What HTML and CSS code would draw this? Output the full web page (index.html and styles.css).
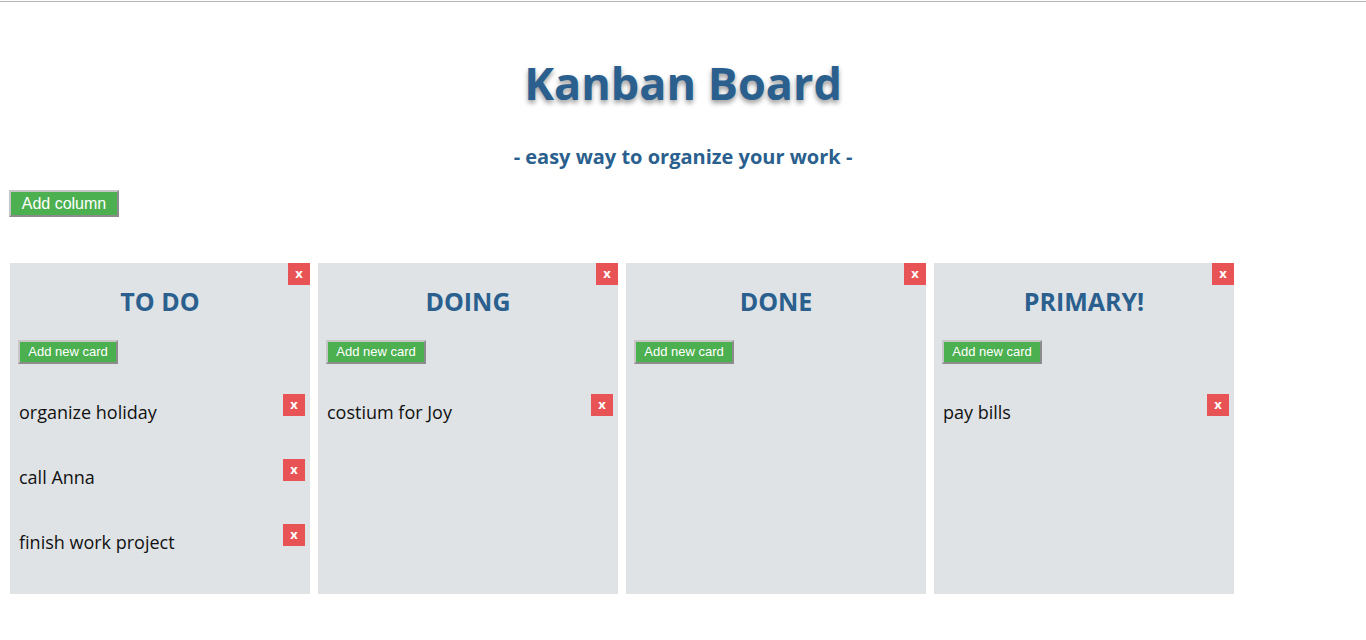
FILE: index.html
```html
<!DOCTYPE html>
<html lang="en">
<head>
<meta charset="utf-8">
<title>Kanban Board</title>
<link rel="stylesheet" href="styles.css">
</head>
<body>
<div class="topline"></div>
<header class="header">
  <h1 class="title">Kanban Board</h1>
  <p class="subtitle">- easy way to organize your work -</p>
</header>
<button class="btn btn-column">Add column</button>
<main class="board">
  <section class="column">
    <button class="delete delete-column">x</button>
    <h2 class="column-title">TO DO</h2>
    <button class="btn btn-card">Add new card</button>
    <ul class="cards">
      <li class="card"><span class="card-text">organize holiday</span><button class="delete delete-card">x</button></li>
      <li class="card"><span class="card-text">call Anna</span><button class="delete delete-card">x</button></li>
      <li class="card"><span class="card-text">finish work project</span><button class="delete delete-card">x</button></li>
    </ul>
  </section>
  <section class="column">
    <button class="delete delete-column">x</button>
    <h2 class="column-title">DOING</h2>
    <button class="btn btn-card">Add new card</button>
    <ul class="cards">
      <li class="card"><span class="card-text">costium for Joy</span><button class="delete delete-card">x</button></li>
    </ul>
  </section>
  <section class="column">
    <button class="delete delete-column">x</button>
    <h2 class="column-title">DONE</h2>
    <button class="btn btn-card">Add new card</button>
    <ul class="cards"></ul>
  </section>
  <section class="column">
    <button class="delete delete-column">x</button>
    <h2 class="column-title">PRIMARY!</h2>
    <button class="btn btn-card">Add new card</button>
    <ul class="cards">
      <li class="card"><span class="card-text">pay bills</span><button class="delete delete-card">x</button></li>
    </ul>
  </section>
</main>
</body>
</html>
```
FILE: styles.css
```css
* { box-sizing: border-box; }

html, body {
  margin: 0;
  padding: 0;
  background: #ffffff;
}

body {
  font-family: "Open Sans", "Liberation Sans", sans-serif;
  color: #111;
}

.topline {
  margin-top: 1px;
  height: 1px;
  background: #b4b4b4;
}

.header {
  text-align: center;
  color: #2a5f8e;
}

.title {
  margin: 53px 0 0;
  font-size: 45px;
  line-height: 56px;
  font-weight: 700;
  text-shadow: 0 3px 5px rgba(0, 0, 0, 0.4);
}

.subtitle {
  margin: 32px 0 0;
  font-size: 20px;
  line-height: 28px;
  font-weight: 700;
}

.btn {
  display: block;
  font-family: "Liberation Sans", Arial, sans-serif;
  color: #fff;
  background: #4caf50;
  border: 2px solid;
  border-color: #c6c6c6 #8c8c8c #8c8c8c #c6c6c6;
  cursor: pointer;
}

.btn-column {
  margin: 19px 0 0 9px;
  width: 110px;
  height: 27px;
  padding: 0;
  font-size: 16px;
  line-height: 19px;
}

.board {
  display: flex;
  gap: 8px;
  margin: 46px 0 0 10px;
}

.column {
  position: relative;
  width: 300px;
  height: 331px;
  padding: 0 8px;
  background: #dfe3e6;
}

.column-title {
  margin: 22px 0 0;
  text-align: center;
  font-size: 25px;
  line-height: 32px;
  font-weight: 700;
  color: #2a5f8e;
}

.btn-card {
  margin-top: 23px;
  width: 100px;
  height: 24px;
  padding: 0;
  font-size: 13px;
  line-height: 16px;
}

.cards {
  list-style: none;
  margin: 16px 0 0;
  padding: 0;
}

.card {
  position: relative;
  display: flex;
  align-items: center;
  height: 65px;
  padding: 0 0 2px 1px;
  font-size: 18px;
}

.delete {
  width: 22px;
  height: 22px;
  padding: 0 0 2px;
  border: none;
  background: #e85456;
  color: #fff;
  font-family: "Open Sans", "Liberation Sans", sans-serif;
  font-size: 13px;
  font-weight: 700;
  line-height: 20px;
  text-align: center;
  cursor: pointer;
}

.delete-column {
  position: absolute;
  top: 0;
  right: 0;
}

.delete-card {
  position: absolute;
  top: 14px;
  right: -3px;
}
```
